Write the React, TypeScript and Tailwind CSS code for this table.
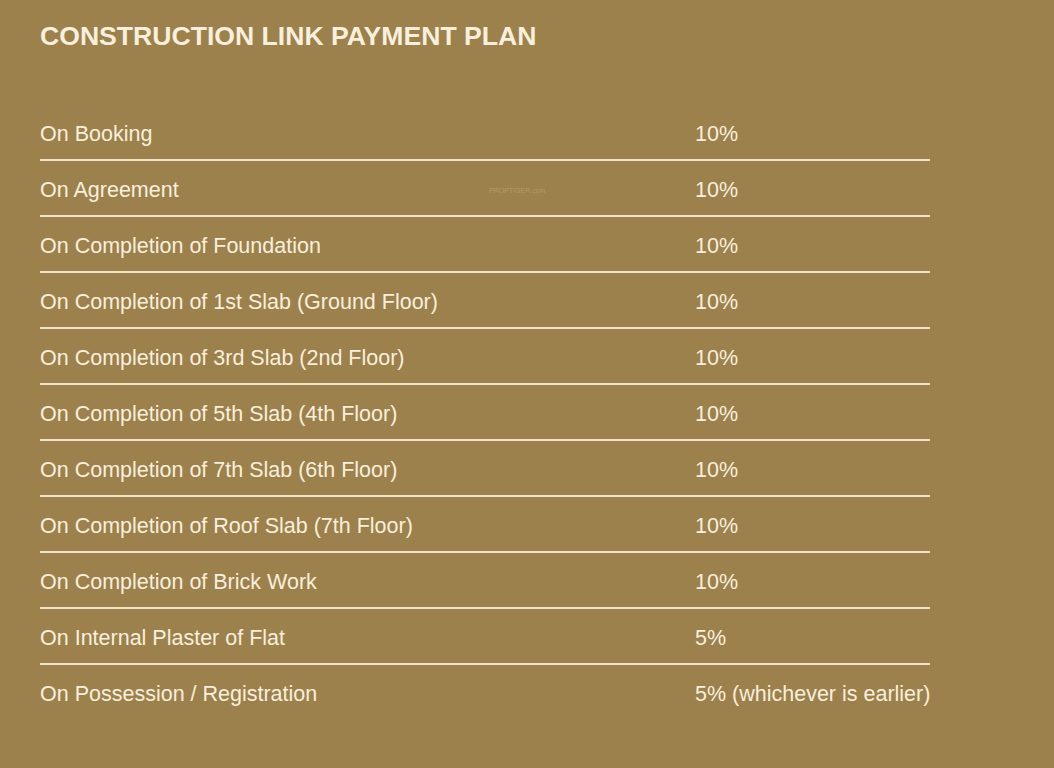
const rows = [
  { stage: "On Booking", pay: "10%" },
  { stage: "On Agreement", pay: "10%" },
  { stage: "On Completion of Foundation", pay: "10%" },
  { stage: "On Completion of 1st Slab (Ground Floor)", pay: "10%" },
  { stage: "On Completion of 3rd Slab (2nd Floor)", pay: "10%" },
  { stage: "On Completion of 5th Slab (4th Floor)", pay: "10%" },
  { stage: "On Completion of 7th Slab (6th Floor)", pay: "10%" },
  { stage: "On Completion of Roof Slab (7th Floor)", pay: "10%" },
  { stage: "On Completion of Brick Work", pay: "10%" },
  { stage: "On Internal Plaster of Flat", pay: "5%" },
  { stage: "On Possession / Registration", pay: "5% (whichever is earlier)" },
];

export default function App() {
  return (
    <div
      className="relative w-[1054px] h-[768px] overflow-hidden bg-[#9c814c] text-[#f8efdc]"
      style={{ fontFamily: '"Liberation Sans", Arial, sans-serif' }}
    >
      <div className="px-[40px] pt-[21px]">
        <h1 className="text-[26.6px] leading-[30px] font-bold whitespace-nowrap">
          CONSTRUCTION LINK PAYMENT PLAN
        </h1>

        {/* Payment table */}
        <div className="mt-[54px] w-[890px]">
          {rows.map((row, i) => (
            <div
              key={row.stage}
              className={`flex pt-[18px] pb-[14px] text-[21.5px] leading-[22px] whitespace-nowrap ${
                i < rows.length - 1 ? "border-b-2 border-[#f1e4c6]" : ""
              }`}
            >
              <div className="w-[655px] shrink-0">{row.stage}</div>
              <div>{row.pay}</div>
            </div>
          ))}
        </div>
      </div>

      {/* watermark */}
      <div className="absolute left-[489px] top-[187px] text-[7px] leading-none text-[#b39a6a]">
        PROPTIGER.com
      </div>
    </div>
  );
}
